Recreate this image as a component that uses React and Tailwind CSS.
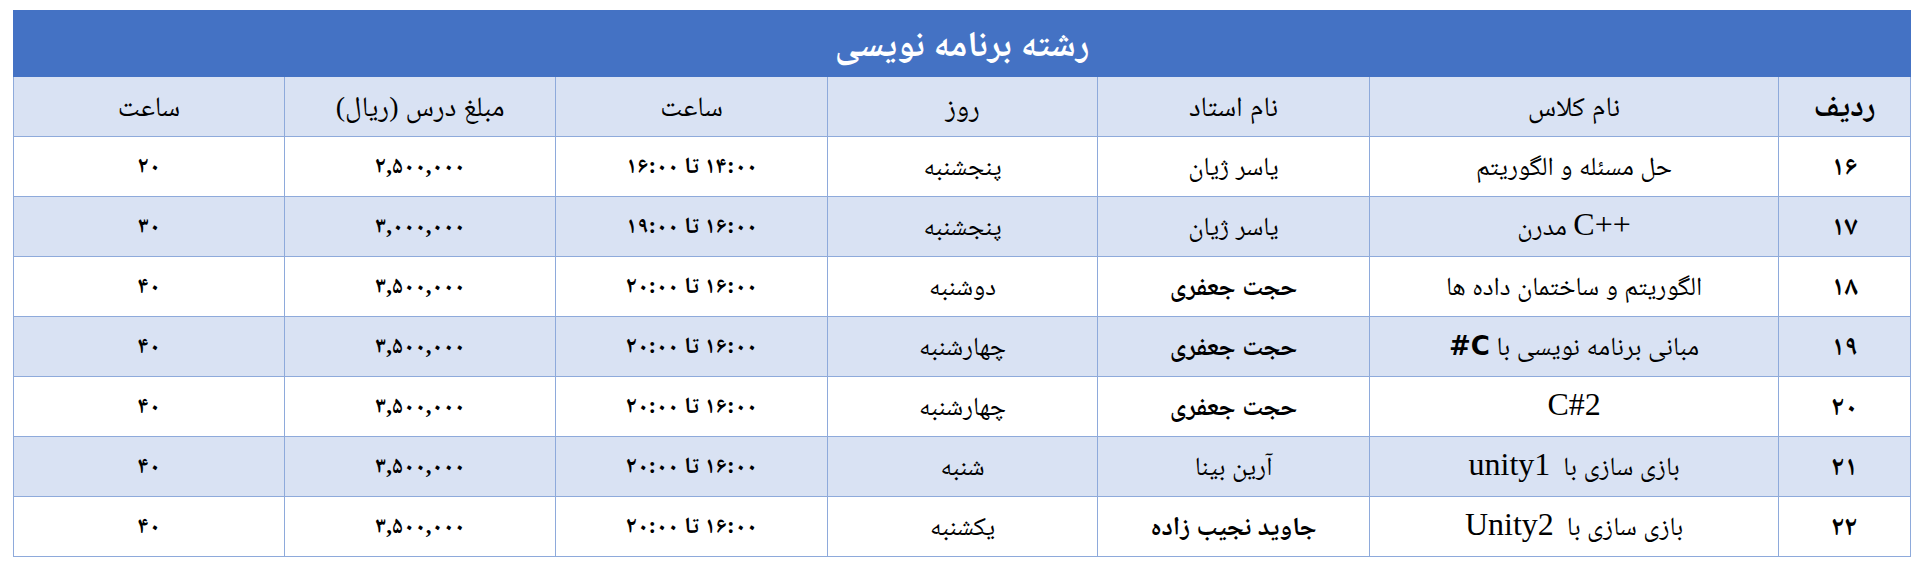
const FONT = 'font-["Liberation_Serif","Noto_Naskh_Arabic","DejaVu_Sans",serif]'

const HEADERS = [
  { label: 'ردیف', w: 'w-[132px]', big: true },
  { label: 'نام کلاس', w: 'w-[409px]' },
  { label: 'نام استاد', w: 'w-[272px]' },
  { label: 'روز', w: 'w-[270px]' },
  { label: 'ساعت', w: 'w-[272px]' },
  { label: 'مبلغ درس (ریال)', w: 'w-[271px]' },
  { label: 'ساعت', w: 'w-[271px]' },
]

// Latin words are set in a larger Times-like face, as in the source document
const Latin = ({ children }) => <span dir="ltr" className="text-[32px] leading-none">{children}</span>

const ROWS = [
  { n: '۱۶', name: 'حل مسئله و الگوریتم', teacher: 'یاسر ژیان', day: 'پنجشنبه', time: '۱۴:۰۰ تا ۱۶:۰۰', price: '۲,۵۰۰,۰۰۰', hours: '۲۰' },
  { n: '۱۷', name: <><Latin>C++</Latin> مدرن</>, teacher: 'یاسر ژیان', day: 'پنجشنبه', time: '۱۶:۰۰ تا ۱۹:۰۰', price: '۳,۰۰۰,۰۰۰', hours: '۳۰' },
  { n: '۱۸', name: 'الگوریتم و ساختمان داده ها', teacher: 'حجت جعفری', boldTeacher: true, day: 'دوشنبه', time: '۱۶:۰۰ تا ۲۰:۰۰', price: '۳,۵۰۰,۰۰۰', hours: '۴۰' },
  { n: '۱۹', name: <>مبانی برنامه نویسی با <span className='font-["DejaVu_Sans",sans-serif] font-bold'>C#</span></>, teacher: 'حجت جعفری', boldTeacher: true, day: 'چهارشنبه', time: '۱۶:۰۰ تا ۲۰:۰۰', price: '۳,۵۰۰,۰۰۰', hours: '۴۰' },
  { n: '۲۰', name: <Latin>C#2</Latin>, teacher: 'حجت جعفری', boldTeacher: true, day: 'چهارشنبه', time: '۱۶:۰۰ تا ۲۰:۰۰', price: '۳,۵۰۰,۰۰۰', hours: '۴۰' },
  { n: '۲۱', name: <>بازی سازی با  <Latin>unity1</Latin></>, teacher: 'آرین بینا', day: 'شنبه', time: '۱۶:۰۰ تا ۲۰:۰۰', price: '۳,۵۰۰,۰۰۰', hours: '۴۰' },
  { n: '۲۲', name: <>بازی سازی با  <Latin>Unity2</Latin></>, teacher: 'جاوید نجیب زاده', boldTeacher: true, day: 'یکشنبه', time: '۱۶:۰۰ تا ۲۰:۰۰', price: '۳,۵۰۰,۰۰۰', hours: '۴۰' },
]

const cell = 'border border-[#8eaadb] text-center align-middle p-0 whitespace-pre'

export default function App() {
  return (
    <div className={`bg-white w-[1920px] h-[571px] pt-[10px] pl-[13px] ${FONT}`}>
      <table dir="rtl" className="table-fixed border-collapse w-[1897px] text-black">
        <colgroup>
          {HEADERS.map((h, i) => <col key={i} className={h.w} />)}
        </colgroup>
        <thead>
          {/* Title band */}
          <tr className="h-[66px]">
            <th colSpan={7} className="bg-[#4472c4] border border-[#4472c4] text-white text-[36px] font-bold text-center align-middle">
              رشته برنامه نویسی
            </th>
          </tr>
          {/* Column headers */}
          <tr className="h-[60px] bg-[#d9e2f3]">
            {HEADERS.map((h, i) => (
              <th key={i} className={`${cell} ${h.big ? 'text-[31px] font-bold' : 'text-[28px] font-normal'}`}>
                {h.label}
              </th>
            ))}
          </tr>
        </thead>
        <tbody>
          {ROWS.map((r, i) => (
            <tr key={r.n} className={`h-[60px] ${i % 2 === 1 ? 'bg-[#d9e2f3]' : 'bg-white'}`}>
              <td className={`${cell} text-[27px] font-bold`}>{r.n}</td>
              <td className={`${cell} text-[26px]`}>{r.name}</td>
              <td className={`${cell} text-[26px] ${r.boldTeacher ? 'font-bold' : ''}`}>{r.teacher}</td>
              <td className={`${cell} text-[26px]`}>{r.day}</td>
              <td className={`${cell} text-[23px] font-bold`}>{r.time}</td>
              <td className={`${cell} text-[23px] font-bold tracking-[0.12em]`}>{r.price}</td>
              <td className={`${cell} text-[23px] font-bold`}>{r.hours}</td>
            </tr>
          ))}
        </tbody>
      </table>
    </div>
  )
}
